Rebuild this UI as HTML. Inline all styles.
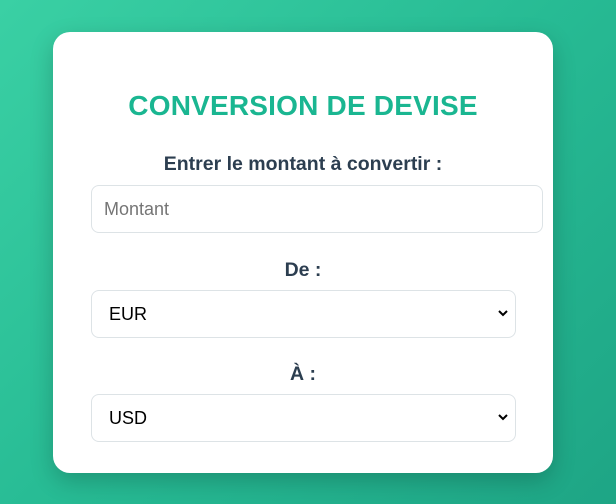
<!DOCTYPE html>
<html><head><meta charset="utf-8"><style>
html,body{margin:0;padding:0;width:616px;height:504px;overflow:hidden}
body{background:linear-gradient(135deg,#3ad0a4 0%,#27bb94 50%,#1ea585 100%);font-family:"Liberation Sans",sans-serif;position:relative}
.card{position:absolute;left:53px;top:32px;width:500px;height:441px;background:#fff;border-radius:17px;box-shadow:0 8px 24px rgba(0,0,0,.2)}
h1{position:absolute;left:0;right:0;top:58px;margin:0;text-align:center;color:#1ab691;font-size:28px;font-weight:bold;letter-spacing:0.2px}
.lbl{position:absolute;left:0;width:500px;text-align:center;color:#2c3e50;font-weight:bold;font-size:19.5px}
.box{position:absolute;left:38px;border:1px solid #dde3e6;border-radius:8px;box-sizing:border-box;font-size:18px;color:#000;padding-left:17px;line-height:46px;height:48px}
.ph{color:#757575;padding-left:12px}
.arr{position:absolute;right:6px;top:17px}
</style></head><body>
<div class="card">
<h1>CONVERSION DE DEVISE</h1>
<div class="lbl" style="top:121px">Entrer le montant à convertir :</div>
<div class="box ph" style="top:153px;width:452px">Montant</div>
<div class="lbl" style="top:227px">De :</div>
<div class="box" style="top:258px;width:425px">EUR<svg class="arr" width="12" height="10" viewBox="0 0 12 10"><path d="M2 3l4 4 4-4" fill="none" stroke="#000" stroke-width="2"/></svg></div>
<div class="lbl" style="top:331px">À :</div>
<div class="box" style="top:362px;width:425px">USD<svg class="arr" width="12" height="10" viewBox="0 0 12 10"><path d="M2 3l4 4 4-4" fill="none" stroke="#000" stroke-width="2"/></svg></div>
</div>
</body></html>
